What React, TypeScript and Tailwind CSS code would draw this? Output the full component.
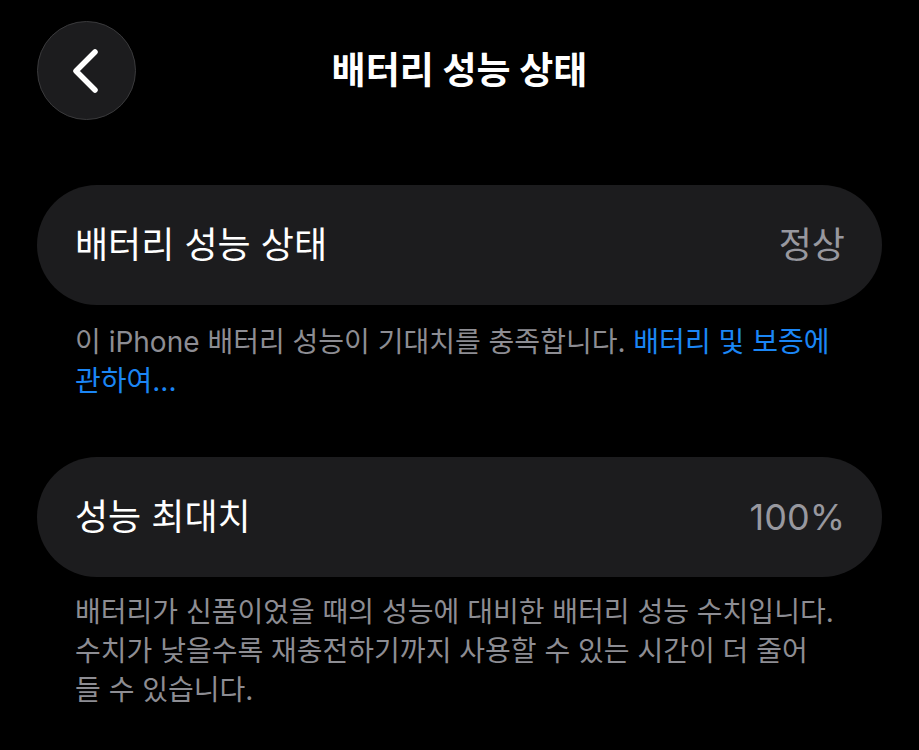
import { ReactNode } from 'react';

const font = { fontFamily: 'Inter, "Noto Sans CJK KR", sans-serif' };

function Row({ label, value }: { label: string; value: string }) {
  return (
    <div className="flex h-[120px] items-center justify-between rounded-[60px] bg-[#1c1c1e] pl-[38px] pr-[37px]">
      <span className="text-[36px] text-white">{label}</span>
      <span className="text-[36px] text-[#98989f]">{value}</span>
    </div>
  );
}

function Note({ children, className = '' }: { children: ReactNode; className?: string }) {
  return (
    <p className={`pl-[38px] pr-[40px] text-[28px] leading-[39px] text-[#8d8d93] ${className}`}>
      {children}
    </p>
  );
}

export default function App() {
  return (
    <div className="min-h-[750px] w-[919px] bg-black" style={font}>
      <header className="grid grid-cols-[99px_1fr_99px] items-center px-[37px] pt-[21px]">
        <button className="flex h-[99px] w-[99px] items-center justify-center rounded-full border border-[#3a3a3c] bg-[#1c1c1e]">
          <svg width="40" height="52" viewBox="0 0 40 52" fill="none">
            <path
              d="M28 7 L9 26 L28 45"
              stroke="white"
              strokeWidth="5.5"
              strokeLinecap="round"
              strokeLinejoin="round"
            />
          </svg>
        </button>
        <h1 className="text-center text-[37px] font-bold text-white">배터리 성능 상태</h1>
        <div />
      </header>

      <main className="px-[37px]">
        <div className="mt-[65px]">
          <Row label="배터리 성능 상태" value="정상" />
        </div>
        <Note className="mt-[18px]">
          이 iPhone 배터리 성능이 기대치를 충족합니다.{' '}
          <span className="text-[#1b86f5]">배터리 및 보증에 관하여...</span>
        </Note>

        <div className="mt-[56px]">
          <Row label="성능 최대치" value="100%" />
        </div>
        <Note className="mt-[16px]">
          배터리가 신품이었을 때의 성능에 대비한 배터리 성능 수치입니다.
          <br />
          수치가 낮을수록 재충전하기까지 사용할 수 있는 시간이 더 줄어
          <br />
          들 수 있습니다.
        </Note>
      </main>
    </div>
  );
}
